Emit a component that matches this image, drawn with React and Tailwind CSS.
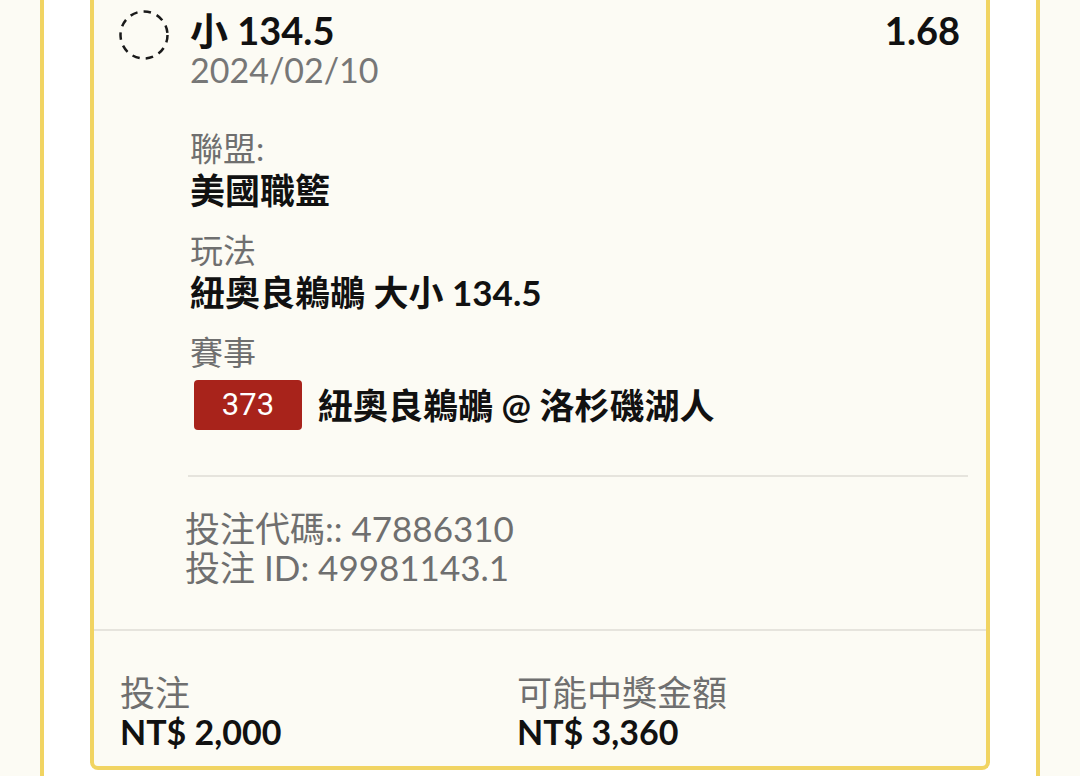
import React from 'react';

const font = "font-['Lato','Noto_Sans_CJK_TC',sans-serif]";

function DashedCircle() {
  return (
    <svg width="52" height="52" viewBox="0 0 52 52" className="shrink-0">
      <circle cx="26" cy="26" r="23.5" fill="none" stroke="#1a1a1a" strokeWidth="2.5" strokeDasharray="7.5 6.2" />
    </svg>
  );
}

function Field({ label, children }) {
  return (
    <div className="flex flex-col">
      <span className="text-[33px] leading-[42px] text-[#6f6f6f]">{label}</span>
      {children}
    </div>
  );
}

export default function App() {
  return (
    <div className={`h-[776px] overflow-hidden bg-[#fcfbf4] px-[40px] ${font}`}>
      <div className="h-full border-x-4 border-[#f1d462] bg-white px-[46px]">
        {/* ticket card */}
        <div className="flex flex-col rounded-b-lg border-x-4 border-b-4 border-[#f1d462] bg-[#fcfbf4]">
          <div className="flex flex-col pl-[24px] pr-[18px]">
            {/* header */}
            <div className="flex items-start pt-[9px]">
              <DashedCircle />
              <div className="ml-[20px] mr-[8px] flex flex-1 flex-col pt-px">
                <div className="flex justify-between">
                  <span className="text-[38px] font-bold leading-[40px] text-[#111]">小 134.5</span>
                  <span className="text-[38px] font-bold leading-[40px] text-[#111]">1.68</span>
                </div>
                <span className="text-[34px] leading-[40px] text-[#777]">2024/02/10</span>
              </div>
            </div>

            {/* details */}
            <div className="ml-[72px] mt-[37px] flex flex-col gap-[18px]">
              <Field label="聯盟:">
                <span className="text-[35px] font-bold leading-[42px] text-[#111]">美國職籃</span>
              </Field>
              <Field label="玩法">
                <span className="text-[35px] font-bold leading-[42px] text-[#111]">紐奧良鵜鶘 大小 134.5</span>
              </Field>
              <Field label="賽事">
                <div className="mt-[7px] flex items-center gap-[16px] pl-[4px]">
                  <span className="flex h-[50px] w-[108px] items-center justify-center rounded-[4px] bg-[#a8231b] font-['Roboto',sans-serif] text-[31px] text-white">
                    373
                  </span>
                  <span className="text-[35px] font-bold leading-[42px] text-[#111]">紐奧良鵜鶘 @ 洛杉磯湖人</span>
                </div>
              </Field>
            </div>

            <div className="ml-[70px] mt-[45px] h-[2px] bg-[#e6e4dd]" />

            <div className="ml-[67px] mt-[32px] mb-[42px] flex flex-col text-[35px] leading-[39px] text-[#6f6f6f]">
              <span>投注代碼:: 47886310</span>
              <span>投注 ID: 49981143.1</span>
            </div>
          </div>

          <div className="h-[2px] bg-[#e6e4dd]" />

          {/* footer */}
          <div className="flex pl-[26px] pt-[41px] pb-[14px]">
            <div className="flex w-[397px] flex-col">
              <span className="text-[35px] leading-[40px] text-[#6f6f6f]">投注</span>
              <span className="text-[34px] font-bold leading-[40px] text-[#111]">NT$ 2,000</span>
            </div>
            <div className="flex flex-col">
              <span className="text-[35px] leading-[40px] text-[#6f6f6f]">可能中獎金額</span>
              <span className="text-[34px] font-bold leading-[40px] text-[#111]">NT$ 3,360</span>
            </div>
          </div>
        </div>
      </div>
    </div>
  );
}
